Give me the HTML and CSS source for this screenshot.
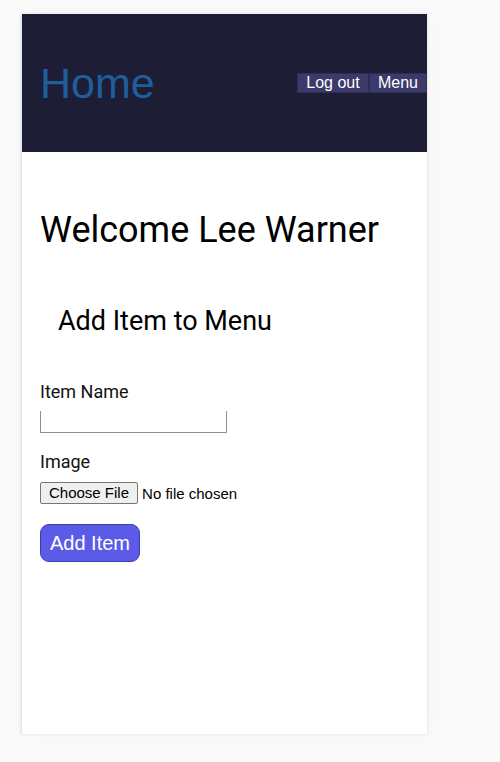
FILE: index.html
```html
<!DOCTYPE html>
<html>
<head>
<meta charset="utf-8">
<link rel="stylesheet" href="styles.css">
</head>
<body>
<div class="card">
  <header class="top">
    <h1 class="brand">Home</h1>
    <nav class="nav">
      <button class="nav-btn">Log out</button><button class="nav-btn">Menu</button>
    </nav>
  </header>
  <main class="content">
    <h2 class="welcome">Welcome Lee Warner</h2>
    <h3 class="subtitle">Add Item to Menu</h3>
    <form class="form">
      <label class="label">Item Name</label>
      <input class="text-input" type="text">
      <label class="label label-image">Image</label>
      <div class="file-row"><span class="file-btn">Choose File</span><span class="file-text">No file chosen</span></div>
      <button class="add-btn" type="button">Add Item</button>
    </form>
  </main>
</div>
</body>
</html>
```

FILE: styles.css
```css
html, body {
  margin: 0;
  padding: 0;
  background: #fafafa;
}
body {
  padding: 14px 0 28px 21px;
  font-family: Roboto, "Liberation Sans", sans-serif;
}
.card {
  width: 406px;
  height: 720px;
  background: #fff;
  box-shadow: 0 0 3px rgba(0,0,0,0.12), 6px 0 30px rgba(0,0,0,0.02);
  border-left: 1px solid #e4e4e4;
  box-sizing: border-box;
  overflow: hidden;
}
.top {
  height: 138px;
  background: #1d1d35;
  display: flex;
  align-items: center;
  justify-content: space-between;
  padding-left: 18px;
}
.brand {
  margin: 0;
  font-family: "Liberation Sans", Arial, sans-serif;
  font-weight: normal;
  font-size: 43px;
  color: #1f5e9d;
  line-height: 1;
  padding-top: 1px;
}
.nav {
  display: flex;
  margin-top: 0;
}
.nav-btn {
  font-family: "Liberation Sans", Arial, sans-serif;
  font-size: 16px;
  color: #fff;
  background: #3c3a6b;
  border: 1px solid #2e2d57;
  height: 20px;
  padding: 0 8px;
  line-height: 18px;
}
.nav-btn:first-child {
  padding: 0 8px 0 8px;
  width: 72px;
}
.content {
  padding: 0 18px;
}
.welcome {
  margin: 57px 0 0;
  font-size: 36px;
  font-weight: 400;
  line-height: 42px;
  color: #000;
}
.subtitle {
  margin: 54px 0 0 18px;
  font-size: 27px;
  font-weight: 400;
  line-height: 32px;
  color: #000;
}
.form {
  display: flex;
  flex-direction: column;
  align-items: flex-start;
  margin-top: 44px;
}
.label {
  font-size: 18px;
  line-height: 22px;
  color: #111;
}
.text-input {
  width: 187px;
  height: 22px;
  box-sizing: border-box;
  border: 1px solid #8f8f8f;
  border-top: none;
  margin: 8px 0 0;
  padding: 0;
}
.label-image {
  margin-top: 18px;
}
.file-row {
  display: flex;
  align-items: center;
  height: 22px;
  margin-top: 9px;
  font-family: "Liberation Sans", Arial, sans-serif;
  font-size: 15px;
  color: #000;
}
.file-btn {
  display: block;
  background: #efefef;
  border: 1px solid #767676;
  border-radius: 2px;
  height: 22px;
  box-sizing: border-box;
  padding: 0 8px;
  line-height: 20px;
  margin-right: 4px;
}
.add-btn {
  margin-top: 20px;
  width: 100px;
  height: 38px;
  background: #5b5be7;
  border: 1px solid #3c3cae;
  border-radius: 9px;
  color: #fff;
  font-family: "Liberation Sans", Arial, sans-serif;
  font-size: 20px;
  padding: 0;
}
```
